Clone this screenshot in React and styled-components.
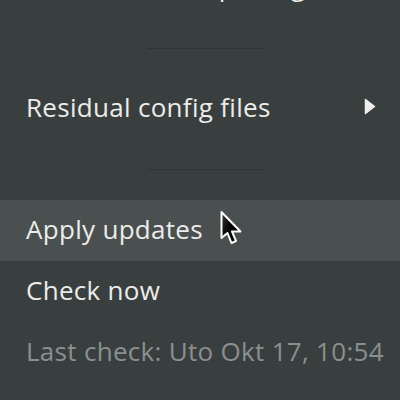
import React from "react";
import styled, { createGlobalStyle } from "styled-components";

const Global = createGlobalStyle`
  html, body { margin: 0; padding: 0; background: #393f3f; }
  body { width: 400px; height: 400px; overflow: hidden; font-family: "Open Sans", "Noto Sans", sans-serif; }
`;

const Menu = styled.div`
  display: flex;
  flex-direction: column;
  width: 400px;
  margin-top: -43px;
  background: #393f3f;
  position: relative;
`;

const Row = styled.div`
  position: relative;
  display: flex;
  align-items: flex-start;
  justify-content: space-between;
  height: 61px;
  box-sizing: border-box;
  padding: 0 24px 3px 26px;
  line-height: 58px;
  font-size: 26px;
  letter-spacing: 0.3px;
  color: ${(p) => (p.$muted ? "#8b8f8f" : "#ececea")};
  background: ${(p) => (p.$hover ? "#4a504f" : "transparent")};
  white-space: nowrap;
`;

const Separator = styled.div`
  display: flex;
  align-items: center;
  justify-content: center;
  padding-left: 10px;
  height: ${(p) => p.$h}px;
  &::after {
    content: "";
    width: 116px;
    height: 1px;
    background: #2f3535;
  }
`;

const Arrow = styled.svg`
  align-self: center;
  margin-top: -2px;
  width: 12px;
  height: 17px;
`;

const Cursor = styled.svg`
  position: absolute;
  left: 219px;
  top: 10px;
  width: 26px;
  height: 38px;
`;

export default function App() {
  return (
    <>
      <Global />
      <Menu>
        <Row>Local/Obsolete packages</Row>
        <Separator $h={60} />
        <Row>
          Residual config files
          <Arrow viewBox="0 0 12 17">
            <path d="M1.5 1.5 L10.5 8.5 L1.5 15.5 Z" fill="#eeeeec" stroke="#eeeeec" strokeWidth="1.5" strokeLinejoin="round" />
          </Arrow>
        </Row>
        <Separator $h={61} />
        <Row $hover>
          Apply updates
          <Cursor viewBox="0 0 26 38">
            <defs>
              <linearGradient id="cg" x1="0" y1="0" x2="1" y2="1">
                <stop offset="0" stopColor="#3a3a3a" />
                <stop offset="0.5" stopColor="#000" />
              </linearGradient>
            </defs>
            <path
              d="M2.5 2 L2.5 28 L8.5 23 L12.5 33 L17 31 L13 21.5 L21.5 21.5 Z"
              fill="url(#cg)"
              stroke="#fff"
              strokeWidth="2"
              strokeLinejoin="round"
            />
          </Cursor>
        </Row>
        <Row>Check now</Row>
        <Row $muted>Last check: Uto Okt 17, 10:54</Row>
      </Menu>
    </>
  );
}
